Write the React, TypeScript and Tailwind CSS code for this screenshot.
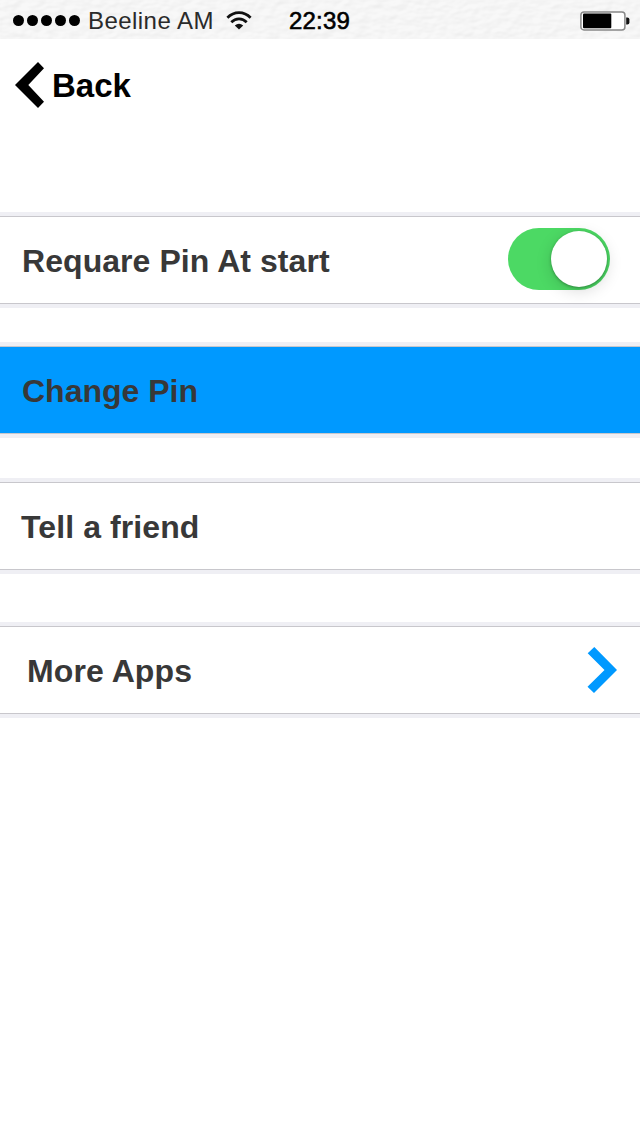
import { useState } from "react";
import type { ReactNode } from "react";

function StatusBar() {
  return (
    <header className="relative h-[39px] bg-[#f6f6f6]">
      <svg className="absolute inset-0 h-full w-full opacity-25" aria-hidden="true">
        <filter id="paper" x="0" y="0" width="100%" height="100%" colorInterpolationFilters="sRGB">
          <feTurbulence type="fractalNoise" baseFrequency="0.08 0.14" numOctaves="2" result="noise" />
          <feDiffuseLighting in="noise" lightingColor="#ffffff" surfaceScale="0.6" diffuseConstant="1.17">
            <feDistantLight azimuth="50" elevation="55" />
          </feDiffuseLighting>
        </filter>
        <rect width="100%" height="100%" filter="url(#paper)" />
      </svg>
      <div className="relative flex h-full items-center pt-[2px] pl-[13px] text-[24px] leading-none">
        <div className="flex gap-[3px]">
          {[0, 1, 2, 3, 4].map((dot) => (
            <span key={dot} className="size-[11px] rounded-full bg-black" />
          ))}
        </div>
        <span className="ml-[8px] w-[138px] whitespace-nowrap tracking-[0.45px] text-[#2a2a2a]">Beeline AM</span>
        <svg className="h-[20px] w-[26px] shrink-0" viewBox="0 0 26 20" fill="none" stroke="#111" strokeWidth="2.7">
          <path d="M1.4 6.8C8 0 18 0 24.6 6.8" />
          <path d="M5.3 11.2C9.7 6.7 16.3 6.7 20.7 11.2" />
          <path d="M8.8 14.6Q13 10.8 17.2 14.6L13 18.4Z" fill="#111" stroke="none" />
        </svg>
        <span className="ml-[37px] text-black tracking-[0.2px] [-webkit-text-stroke:0.6px_#000]">22:39</span>
        <svg className="mr-[10px] ml-auto h-[20px] w-[50px]" viewBox="0 0 50 20">
          <rect x="0.9" y="0.9" width="44" height="18" rx="3" fill="#fff" stroke="#888" strokeWidth="1.5" />
          <rect x="3" y="2.6" width="28.3" height="14.6" rx="1" fill="#000" />
          <path d="M46.2 6.5h1.2q2 0 2 2v3q0 2-2 2h-1.2z" fill="#111" />
        </svg>
      </div>
    </header>
  );
}

function Toggle({ on, onChange }: { on: boolean; onChange: () => void }) {
  return (
    <button
      type="button"
      role="switch"
      aria-checked={on}
      onClick={onChange}
      className={`flex h-[62px] w-[102px] items-center rounded-full px-[3px] ${
        on ? "justify-end bg-[#4cd964]" : "justify-start bg-gray-200"
      }`}
    >
      <span className="size-[56px] rounded-full bg-white shadow-[0_4px_16px_rgba(0,0,0,0.15),0_1px_3px_rgba(0,0,0,0.3)]" />
    </button>
  );
}

function Row({ className, children }: { className: string; children: ReactNode }) {
  return (
    <div className="h-24 border-y-4 border-[#efeff4]">
      <div className={`flex h-[88px] items-center border-y border-[#c8c7cc] pt-[2px] ${className}`}>{children}</div>
    </div>
  );
}

export default function App() {
  const [requirePin, setRequirePin] = useState(true);

  return (
    <div className="min-h-[1136px] w-[640px] overflow-hidden bg-white font-['Liberation_Sans',Arial,sans-serif]">
      <StatusBar />

      <nav className="flex h-[92px] items-center pl-[14px]">
        <button type="button" className="flex items-center text-[33px] leading-none font-bold text-black">
          <svg className="h-[48px] w-[32px]" viewBox="0 0 32 48">
            <path d="M1 24L24 1L30 7.3L14.3 24L30 40.7L24 47Z" />
          </svg>
          <span className="ml-[6px]">Back</span>
        </button>
      </nav>

      <main className="pt-[81px] text-[32px] leading-none font-bold text-[#383838]">
        <Row className="justify-between pr-[30px] pl-[22px]">
          <span className="tracking-[0.06px]">Requare Pin At start</span>
          <div className="-mt-[4px]">
            <Toggle on={requirePin} onChange={() => setRequirePin(!requirePin)} />
          </div>
        </Row>
        <div className="mt-[34px]">
          <Row className="bg-[#0099ff] pl-[22px]">Change Pin</Row>
        </div>
        <div className="mt-[40px]">
          <Row className="pl-[21px] tracking-[0.1px]">Tell a friend</Row>
        </div>
        <div className="mt-[48px]">
          <Row className="justify-between pr-[22px] pl-[27px]">
            <span className="tracking-[0.1px]">More Apps</span>
            <svg className="-mt-[2px] h-[48px] w-[32px]" viewBox="0 0 32 48" fill="#0099ff">
              <path d="M1.7 7.3L8.3 1L31 24L8 47L1.5 40.7L18.5 24Z" />
            </svg>
          </Row>
        </div>
      </main>
    </div>
  );
}
